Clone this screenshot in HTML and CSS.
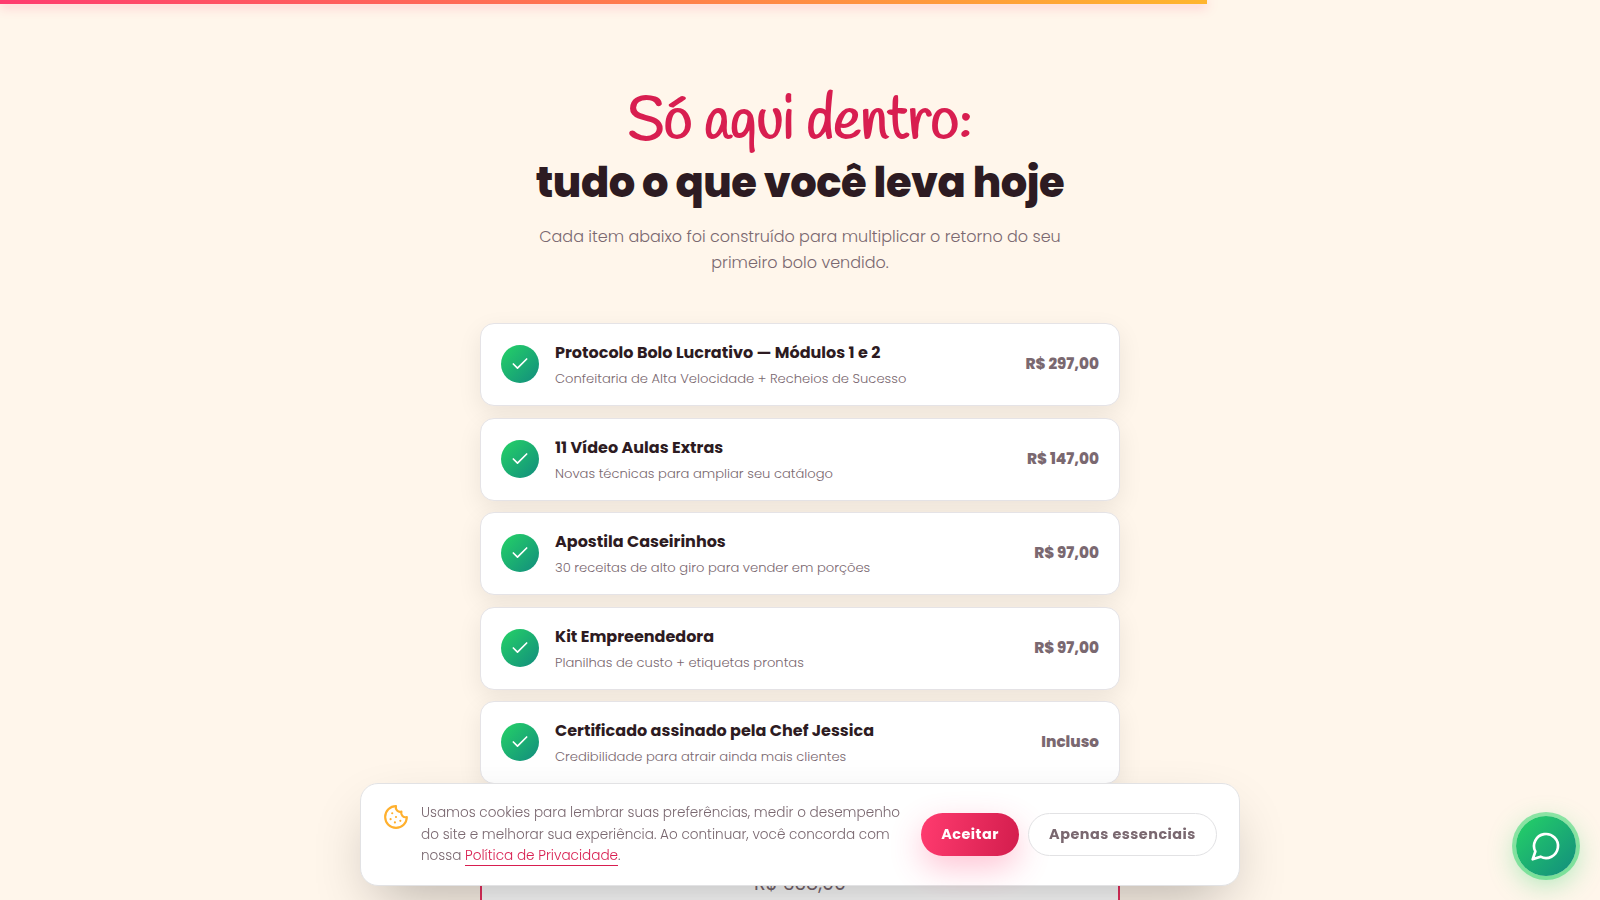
FILE: index.html
```html
<!DOCTYPE html>
<html lang="pt-BR">
<head>
<meta charset="utf-8">
<title>Protocolo Bolo Lucrativo</title>
<link rel="stylesheet" href="styles.css">
</head>
<body>
<svg width="0" height="0" class="defs"><symbol id="check" viewBox="0 0 24 24"><path d="M20 6 9 17l-5-5"/></symbol></svg>
<div class="progress"></div>
<main class="offer">
  <header class="head">
    <h2 class="title"><span class="script">Só aqui dentro:</span><span class="strong">tudo o que você leva hoje</span></h2>
    <p class="lead">Cada item abaixo foi construído para multiplicar o retorno do seu primeiro bolo vendido.</p>
  </header>
  <ul class="list">
    <li class="item"><span class="tick"><svg><use href="#check"/></svg></span><div class="info"><strong>Protocolo Bolo Lucrativo — Módulos 1 e 2</strong><small>Confeitaria de Alta Velocidade + Recheios de Sucesso</small></div><b class="price">R$ 297,00</b></li>
    <li class="item"><span class="tick"><svg><use href="#check"/></svg></span><div class="info"><strong>11 Vídeo Aulas Extras</strong><small>Novas técnicas para ampliar seu catálogo</small></div><b class="price">R$ 147,00</b></li>
    <li class="item"><span class="tick"><svg><use href="#check"/></svg></span><div class="info"><strong>Apostila Caseirinhos</strong><small>30 receitas de alto giro para vender em porções</small></div><b class="price">R$ 97,00</b></li>
    <li class="item"><span class="tick"><svg><use href="#check"/></svg></span><div class="info"><strong>Kit Empreendedora</strong><small>Planilhas de custo + etiquetas prontas</small></div><b class="price">R$ 97,00</b></li>
    <li class="item"><span class="tick"><svg><use href="#check"/></svg></span><div class="info"><strong>Certificado assinado pela Chef Jessica</strong><small>Credibilidade para atrair ainda mais clientes</small></div><b class="price">Incluso</b></li>
  </ul>
  <section class="total"><s>R$ 638,00</s></section>
</main>
<aside class="cookie">
  <svg class="cookie-icon" viewBox="0 0 24 24"><path d="M12 2a10 10 0 1 0 10 10 4 4 0 0 1-5-5 4 4 0 0 1-5-5"/><path d="M8.5 8.5v.01M16 15.5v.01M12 12v.01M11 17v.01M7 14v.01"/></svg>
  <p class="cookie-text">Usamos cookies para lembrar suas preferências, medir o desempenho do site e melhorar sua experiência. Ao continuar, você concorda com nossa <a href="#">Política de Privacidade</a>.</p>
  <div class="actions"><button class="btn accept">Aceitar</button><button class="btn ghost">Apenas essenciais</button></div>
</aside>
<a class="chat" href="#"><svg viewBox="0 0 24 24"><path d="M7.9 20A9 9 0 1 0 4 16.1L2 22Z"/></svg></a>
</body>
</html>
```
FILE: styles.css
```css
* { box-sizing: border-box; margin: 0; padding: 0; }
body {
  height: 900px;
  overflow: hidden;
  background: #fff6eb;
  color: #2d1b22;
  font-family: Poppins, Inter, sans-serif;
  font-size: 16px;
}
.defs { position: absolute; }
svg { fill: none; stroke: currentColor; stroke-width: 2; stroke-linecap: round; stroke-linejoin: round; }
.progress {
  position: fixed; top: 0; left: 0;
  width: 1207px; height: 4px;
  background: linear-gradient(90deg, #ff3b6f, #ffb52e);
  box-shadow: 0 2px 12px rgba(255, 59, 111, .4);
}
.offer { width: 640px; height: 900px; margin: 0 auto; padding-top: 85px; display: flex; flex-direction: column; }
.head { text-align: center; }
.title { display: flex; flex-direction: column; align-items: center; letter-spacing: -.5px; }
.script {
  height: 71px;
  font: 800 58.24px/76px Handlee, cursive;
  color: #d81e50;
  white-space: nowrap;
}
.strong { font-size: 41.6px; font-weight: 800; line-height: 54px; white-space: nowrap; }
.lead { width: 560px; margin: 14px auto 0; font-weight: 300; line-height: 26.4px; color: #7a6870; }
.list { margin-top: 46.5px; list-style: none; display: flex; flex-direction: column; gap: 11.7px; }
.item {
  height: 82.8px;
  display: flex; align-items: center; gap: 16px;
  padding: 0 20px .3px;
  background: #fff;
  border: 1px solid #e5e3e6;
  border-radius: 14px;
  box-shadow: 0 8px 24px rgba(0, 0, 0, .08);
}
.tick {
  width: 38px; height: 38px; flex: none;
  display: grid; place-items: center;
  margin-bottom: .6px;
  border-radius: 50%;
  color: #fff;
  background: linear-gradient(135deg, #25d366, #128c7e);
}
.tick svg { width: 20px; height: 20px; }
.info { flex: 1; margin-top: 1.4px; display: flex; flex-direction: column; white-space: nowrap; }
.info strong { font-size: 16px; font-weight: 700; line-height: 27px; }
.info small { font-size: 13.12px; font-weight: 300; line-height: 25px; color: #7a6870; }
.price { margin-bottom: 1.5px; font-size: 15.2px; font-weight: 800; color: #7a6870; }
.total {
  flex: 1;
  margin-top: 24px;
  padding-top: 58.7px;
  border: 2px solid #e8305f;
  border-bottom: 0;
  border-radius: 20px 20px 0 0;
  background: #fff;
  text-align: center;
  font-size: 19.2px; line-height: 30px;
  color: #7a6870;
}
.cookie {
  position: fixed; left: 360px; bottom: 14px;
  width: 880px; height: 103px;
  display: flex; align-items: center;
  padding: 0 22px;
  background: #fff;
  border: 1px solid #e2e2e4;
  border-radius: 18px;
  box-shadow: 0 24px 60px -16px rgba(0, 0, 0, .3);
}
.cookie-icon { width: 26px; height: 26px; flex: none; align-self: flex-start; margin-top: 20px; color: #ffb02e; }
.cookie-text { margin-left: 12px; margin-right: 16px; flex: 1; font-size: 13.6px; font-weight: 300; line-height: 21.6px; color: #7a6870; }
.cookie-text a { color: #d81e50; text-decoration: none; border-bottom: 1px solid #d81e50; }
.actions { display: flex; gap: 9px; }
.btn {
  height: 43px;
  border: 0; border-radius: 22px;
  font: 700 14.4px/43px Poppins, Inter, sans-serif;
  letter-spacing: .5px;
  white-space: nowrap;
}
.accept { width: 98px; color: #fff; background: linear-gradient(100deg, #ff3b6f, #d31d4d); box-shadow: 0 12px 32px rgba(255, 59, 111, .3); }
.ghost { width: 189px; color: #7a6870; background: #fff; border: 1px solid #e2e2e4; line-height: 41px; }
.chat {
  position: fixed; right: 24px; bottom: 24px;
  width: 60px; height: 60px;
  display: grid; place-items: center;
  border-radius: 50%;
  color: #fff;
  background: linear-gradient(135deg, #25d366, #128c7e);
  box-shadow: 0 0 0 4px rgba(37, 211, 102, .5), 0 8px 28px rgba(37, 211, 102, .4);
}
.chat svg { width: 32px; height: 32px; }
```
